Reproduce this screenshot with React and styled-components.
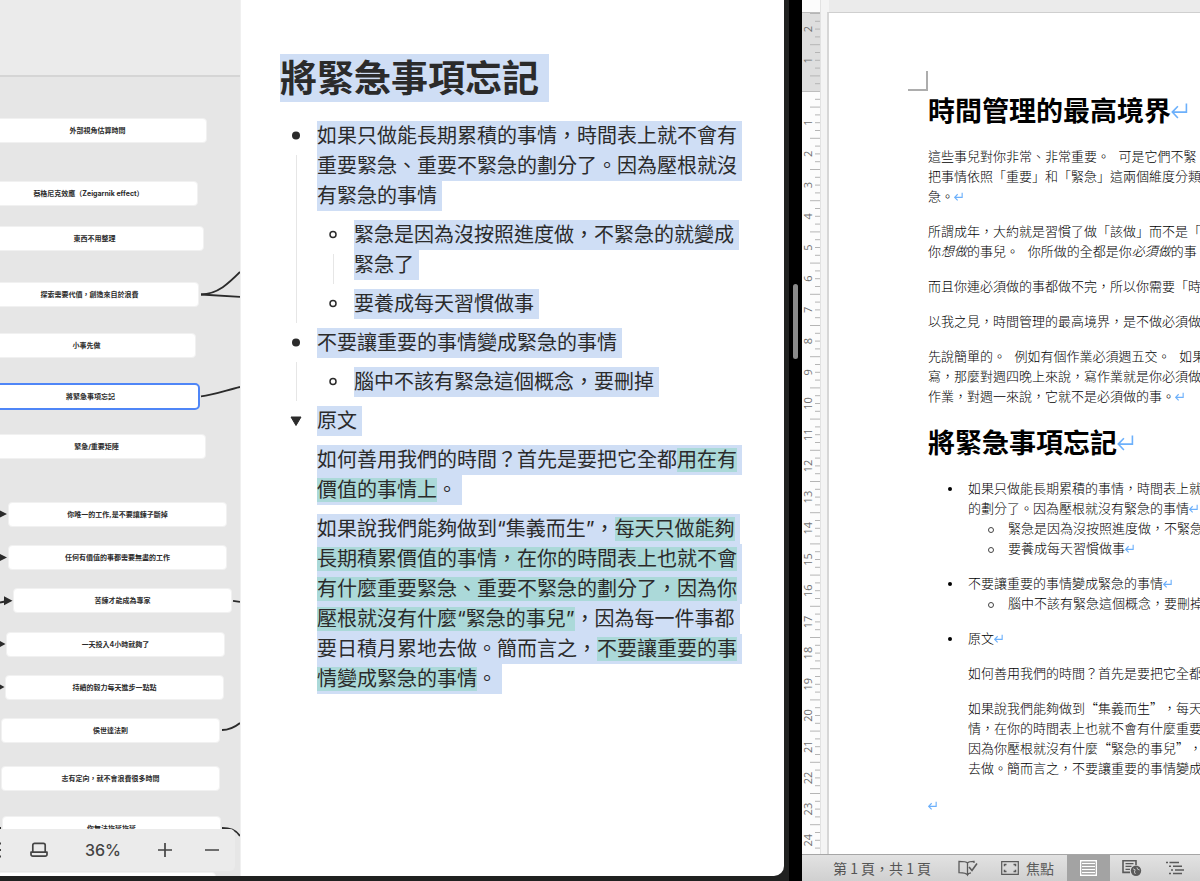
import styled, { createGlobalStyle, css } from "styled-components";

const GlobalStyle = createGlobalStyle`
  *, *::before {
    box-sizing: border-box;
  }

  body {
    margin: 0;
    overflow: hidden;
    font-family: Inter, "Noto Sans CJK TC", sans-serif;
    color: #2b2b2b;
    text-spacing-trim: space-all;
  }

  h1, h2, p, ul {
    margin: 0;
    padding: 0;
    list-style: none;
  }

  svg {
    display: block;
    flex: none;
  }
`;

const Screen = styled.main`
  display: grid;
  grid-template-columns: minmax(0, 789fr) 13px minmax(0, 398fr);
  height: 100vh;
  background: #000;
`;

/* ---------- left window ---------- */

const NotesWindow = styled.section`
  display: flex;
  min-height: 0;
  padding: 0 5px 5px 0;
  background: #202120;
`;

const NotesBody = styled.div`
  display: flex;
  flex: 1;
  min-width: 0;
  overflow: hidden;
  background: #fff;
  border-radius: 0 0 10px 0;
`;

const MapPane = styled.aside`
  position: relative;
  display: flex;
  flex-direction: column;
  flex: 0 0 241px;
  overflow: hidden;
  background: #e6e6e6;
  border-right: 1px solid #f0f0f0;
`;

const MapHeader = styled.div`
  flex: 0 0 77px;
  background: #ebebeb;
  border-bottom: 2px solid #d5d5d5;
`;

const Edges = styled.svg`
  position: absolute;
  top: 0;
  left: 0;
`;

const MapNode = styled.div`
  position: absolute;
  top: ${({ $y }) => $y}px;
  left: ${({ $x }) => $x}px;
  display: flex;
  align-items: center;
  justify-content: center;
  width: 219px;
  height: 25px;
  background: #fff;
  border: 1px solid #f1f1f1;
  border-radius: 4px;
  font-size: 7px;
  font-weight: 700;
  line-height: 10px;
  white-space: nowrap;

  ${({ $active }) =>
    $active &&
    css`
      height: 27px;
      border: 2px solid #4f86f7;
      border-radius: 5px;
    `}
`;

const MapToolbar = styled.div`
  position: absolute;
  right: 5px;
  bottom: 5px;
  left: 0;
  display: flex;
  align-items: center;
  justify-content: flex-end;
  gap: 29px;
  height: 42px;
  padding-right: 14px;
  overflow: hidden;
  background: #ebebeb;
  border-radius: 0 5px 5px 0;
`;

const ToolButton = styled.button`
  display: flex;
  flex: none;
  align-items: center;
  justify-content: center;
  width: 18px;
  height: 24px;
  padding: 0;
  background: none;
  border: 0;
  color: #444;
`;

const ZoomLevel = styled.output`
  width: 34px;
  margin: 0 8px;
  color: #444;
  font-size: 16px;
  font-weight: 500;
  line-height: 24px;
  text-align: center;
  white-space: nowrap;
`;

const Note = styled.article`
  flex: 1;
  min-width: 0;
  padding: 55px 40px 0 39px;
  font-size: 20px;
  line-height: 30px;
`;

const NoteTitle = styled.h1`
  margin-bottom: 18px;
  font-size: 37px;
  font-weight: 700;
  line-height: 48px;
`;

const Selected = styled.span`
  padding: 3px 5px 3px 0;
  background: #cfdef5;
  -webkit-box-decoration-break: clone;
  box-decoration-break: clone;

  ${NoteTitle} & {
    padding: 2px 10px 1px 0;
  }
`;

const Marked = styled.mark`
  background: #abd9d9;
  color: inherit;
`;

const NoteList = styled.ul`
  display: flex;
  flex-direction: column;
  gap: 9px;
`;

const NoteItem = styled.li`
  display: grid;
  grid-template-columns: 32px minmax(0, 1fr);
  column-gap: 5px;
`;

const Gutter = styled.div`
  display: flex;
  flex-direction: column;
  align-items: center;
`;

const MarkerBox = styled.span`
  display: flex;
  align-items: center;
  height: 30px;
  margin-bottom: 4px;
`;

const Guide = styled.span`
  flex: 1;
  width: 1px;
  margin-bottom: -4px;
  background: #e6e6e6;
`;

const ItemContent = styled.div`
  display: flex;
  flex-direction: column;
  gap: 9px;
`;

/* ---------- split handle ---------- */

const SplitBar = styled.div`
  display: flex;
  justify-content: center;
  padding-top: 284px;
`;

const SplitHandle = styled.span`
  width: 5px;
  height: 75px;
  background: #8b8b8b;
  border-radius: 3px;
`;

/* ---------- right window ---------- */

const WordWindow = styled.section`
  display: grid;
  grid-template-rows: minmax(0, 1fr) 27px;
  min-width: 0;
  min-height: 0;
  overflow: hidden;
  background: #fff;
  font-family: "Noto Sans CJK TC", sans-serif;
`;

const Workspace = styled.div`
  display: grid;
  grid-template-columns: 19px minmax(0, 1fr);
  min-height: 0;
  overflow: hidden;
`;

const RulerPane = styled.div`
  overflow: hidden;
  background: #fcfcfc;
  border-right: 1px solid #e2e2e2;
`;

const PageArea = styled.div`
  padding: 12px 0 0 6px;
  overflow: hidden;
  background: linear-gradient(90deg, #f4f4f4 8px, #ebebeb 8px);
`;

const Page = styled.article`
  position: relative;
  min-width: 596px;
  min-height: 100%;
  padding: 79px 0 0 99px;
  background: #fff;
  border-top: 1px solid #cfcfcf;
  border-left: 2px solid #d6d6d6;
  color: #000;
  font-size: 13px;
  font-weight: 300;
  line-height: 20px;
  white-space: nowrap;
`;

const CornerMark = styled.span`
  position: absolute;
  top: 58px;
  left: 79px;
  width: 20px;
  height: 20px;
  border: solid #adadad;
  border-width: 0 2px 2px 0;
`;

const Heading = styled.h2`
  margin-bottom: 18px;
  font-size: 27px;
  font-weight: 700;
  line-height: 36px;

  p + & {
    margin-top: 18px;
  }
`;

const Paragraph = styled.p`
  & + & {
    margin-top: 15px;
  }
`;

const DocList = styled.ul`
  display: flex;
  flex-direction: column;
  gap: 15px;
  padding-left: 40px;
  margin-bottom: 17px;

  & & {
    gap: 0;
    margin: 0;
  }
`;

const DocItem = styled.li`
  &::before {
    content: "";
    float: left;
    width: ${({ $open }) => ($open ? 6 : 4)}px;
    height: ${({ $open }) => ($open ? 6 : 4)}px;
    margin: 9px 0 0 -20px;
    border-radius: 50%;
    ${({ $open }) => ($open ? "border: 1px solid #444;" : "background: #000;")}
  }
`;

const ReturnIcon = styled.svg`
  display: inline-block;
  width: ${({ $big }) => ($big ? 17 : 9)}px;
  height: ${({ $big }) => ($big ? 17 : 9)}px;
  vertical-align: ${({ $big }) => ($big ? "2px" : "0")};
`;

const StatusBar = styled.footer`
  display: flex;
  align-items: stretch;
  min-width: 398px;
  padding-left: 31px;
  background: linear-gradient(#e2e2e2, #d0d0d0);
  border-top: 1px solid #a6a6a6;
  color: #555;
  font-size: 14px;
  line-height: 26px;
  white-space: nowrap;
`;

const PageCount = styled.span`
  width: 125px;
`;

const StatusButton = styled.button`
  display: flex;
  align-items: center;
  justify-content: ${({ $wide }) => ($wide ? "flex-start" : "center")};
  gap: 7px;
  width: ${({ $wide }) => ($wide ? 66 : 43)}px;
  padding: 0;
  background: ${({ $active }) => ($active ? "#a3a3a3" : "none")};
  border: 0;
  color: #5a5a5a;
  font: inherit;
`;

const ProofButton = styled(StatusButton)`
  justify-content: flex-start;
`;

const NODES = [
  { x: -12, y: 118, text: "外部視角估算時間" },
  { x: -21, y: 181, text: "蔡格尼克效應（Zeigarnik effect）" },
  { x: -15, y: 226, text: "東西不用整理" },
  { x: -20, y: 282, text: "探索需要代價，創造來自於浪費" },
  { x: -23, y: 333, text: "小事先做" },
  { x: -19, y: 383, text: "將緊急事項忘記", active: true },
  { x: -13, y: 434, text: "緊急/重要矩陣" },
  { x: 8, y: 502, text: "你唯一的工作,是不要讓鍊子斷掉" },
  { x: 8, y: 545, text: "任何有價值的事都需要無盡的工作" },
  { x: 13, y: 588, text: "苦練才能成為專家" },
  { x: 6, y: 632, text: "一天投入4小時就夠了" },
  { x: 5, y: 675, text: "持續的毅力每天進步一點點" },
  { x: 1, y: 718, text: "侯世達法則" },
  { x: 1, y: 766, text: "志有定向，就不會浪費很多時間" },
  { x: 2, y: 816, text: "你無法拖延拖延" },
  { x: -3, y: 872, text: "" },
];

function MapEdges() {
  return (
    <Edges width="240" height="876" fill="none" stroke="#2b2b2b" strokeWidth="1.8">
      <path d="M201 294.5C218 294 229 283 240 272" />
      <path d="M201 294.5L240 296.8" />
      <path d="M201 396.3C214 395 227 390 240 387" />
      <path d="M0 602.5L5 601.5" />
      <path d="M233 600.8L240 601.8" />
      <path d="M222 730C230 730 235 727 240 723" />
      <path d="M222 828C231 828 236 830 240 836" />
      <path d="M0 828H1" />
      <g fill="#2b2b2b" stroke="none">
        <path d="M-2 509.5L7 514L-2 518.5Z" />
        <path d="M-2 553L7 557.5L-2 562Z" />
        <path d="M4 596.3L12.5 600.8L4 605.3Z" />
        <path d="M-3 639.5L5.5 644L-3 648.5Z" />
        <path d="M-4 682.5L4.5 687L-4 691.5Z" />
      </g>
    </Edges>
  );
}

function Marker({ kind }) {
  return (
    <MarkerBox>
      <svg width="12" height="12" viewBox="0 0 12 12">
        {kind === "dot" && <circle cx="6" cy="5.5" r="4" fill="#2b2b2b" />}
        {kind === "ring" && (
          <circle cx="6" cy="5.5" r="3" fill="none" stroke="#2b2b2b" strokeWidth="1.5" />
        )}
        {kind === "toggle" && (
          <path d="M1 2h10L6 10.5z" fill="#2b2b2b" stroke="#2b2b2b" strokeLinejoin="round" />
        )}
      </svg>
    </MarkerBox>
  );
}

function Item({ kind, children }) {
  return (
    <NoteItem>
      <Gutter>
        <Marker kind={kind} />
        {kind !== "toggle" && <Guide />}
      </Gutter>
      <ItemContent>{children}</ItemContent>
    </NoteItem>
  );
}

function Line({ children }) {
  return (
    <p>
      <Selected>{children}</Selected>
    </p>
  );
}

function Return({ big }) {
  return (
    <ReturnIcon
      $big={big}
      viewBox="0 0 16 16"
      fill="none"
      stroke="#6cb0fb"
      strokeWidth={big ? 1.5 : 2}
      aria-hidden="true"
    >
      <path d="M14.5 1.5V9.5H1.5M6.5 4L1.2 9.5L6.5 15" />
    </ReturnIcon>
  );
}

const CM = 31.2;
const ZERO = 91.5;

function Ruler() {
  const ticks = [];
  for (let q = -10; q <= 99; q++) {
    if (q !== 0) {
      const y = ZERO + (q * CM) / 4;
      const long = Math.abs(q % 4) === 2;
      ticks.push(<path key={q} d={`M${long ? 8 : 13} ${y}H18`} />);
    }
  }
  const labels = [-2, -1];
  for (let n = 1; n <= 24; n++) labels.push(n);

  return (
    <svg width="18" height="854">
      <rect y="13" width="18" height="78.5" fill="#dedede" />
      <path d="M0 12.5H18M0 91.5H18" stroke="#bdbdbd" />
      <g stroke="#b5b5b5">{ticks}</g>
      <g fill="#707070" fontFamily="Open Sans, sans-serif" fontSize="11" textAnchor="middle">
        {labels.map((n) => (
          <text key={n} transform={`translate(10 ${ZERO + n * CM}) rotate(-90)`}>
            {Math.abs(n)}
          </text>
        ))}
      </g>
    </svg>
  );
}

function Notes() {
  return (
    <NotesWindow>
      <NotesBody>
        <MapPane>
          <MapHeader />
          <MapEdges />
          {NODES.map((node) => (
            <MapNode key={node.y} $x={node.x} $y={node.y} $active={node.active}>
              {node.text}
            </MapNode>
          ))}
          <MapToolbar>
            <ToolButton aria-label="List">
              <svg width="18" height="18" viewBox="0 0 18 18" stroke="currentColor" strokeWidth="1.8">
                <path d="M4 2.5H18M4 9H18M4 15.5H18" />
              </svg>
            </ToolButton>
            <ToolButton aria-label="Fit to screen">
              <svg width="18" height="16" viewBox="0 0 18 16" fill="none" stroke="currentColor" strokeWidth="1.7">
                <path d="M2.8 10V3.2A1.8 1.8 0 0 1 4.6 1.4H13.4A1.8 1.8 0 0 1 15.2 3.2V10" />
                <path d="M1 10.2H17V12.4A1.8 1.8 0 0 1 15.2 14.2H2.8A1.8 1.8 0 0 1 1 12.4Z" strokeLinejoin="round" />
              </svg>
            </ToolButton>
            <ZoomLevel>36%</ZoomLevel>
            <ToolButton aria-label="Zoom in">
              <svg width="14" height="14" viewBox="0 0 14 14" stroke="currentColor" strokeWidth="1.7">
                <path d="M7 0V14M0 7H14" />
              </svg>
            </ToolButton>
            <ToolButton aria-label="Zoom out">
              <svg width="14" height="14" viewBox="0 0 14 14" stroke="currentColor" strokeWidth="1.7">
                <path d="M0 7H14" />
              </svg>
            </ToolButton>
          </MapToolbar>
        </MapPane>

        <Note>
          <NoteTitle>
            <Selected>將緊急事項忘記</Selected>
          </NoteTitle>
          <NoteList>
            <Item kind="dot">
              <Line>如果只做能長期累積的事情，時間表上就不會有重要緊急、重要不緊急的劃分了。因為壓根就沒有緊急的事情</Line>
              <NoteList>
                <Item kind="ring">
                  <Line>緊急是因為沒按照進度做，不緊急的就變成緊急了</Line>
                </Item>
                <Item kind="ring">
                  <Line>要養成每天習慣做事</Line>
                </Item>
              </NoteList>
            </Item>
            <Item kind="dot">
              <Line>不要讓重要的事情變成緊急的事情</Line>
              <NoteList>
                <Item kind="ring">
                  <Line>腦中不該有緊急這個概念，要刪掉</Line>
                </Item>
              </NoteList>
            </Item>
            <Item kind="toggle">
              <Line>原文</Line>
              <Line>
                如何善用我們的時間？首先是要把它全都<Marked>用在有價值的事情上</Marked>。
              </Line>
              <Line>
                如果說我們能夠做到“集義而生”，
                <Marked>每天只做能夠長期積累價值的事情，在你的時間表上也就不會有什麼重要緊急、重要不緊急的劃分了，因為你壓根就沒有什麼“緊急的事兒”</Marked>
                ，因為每一件事都要日積月累地去做。簡而言之，
                <Marked>不要讓重要的事情變成緊急的事情</Marked>。
              </Line>
            </Item>
          </NoteList>
        </Note>
      </NotesBody>
    </NotesWindow>
  );
}

function WordDocument() {
  return (
    <Page>
      <CornerMark />
      <Heading>
        時間管理的最高境界
        <Return big />
      </Heading>
      <Paragraph>
        這些事兒對你非常、非常重要。&nbsp;&nbsp;&nbsp;可是它們不緊
        <br />
        把事情依照「重要」和「緊急」這兩個維度分類
        <br />
        急。
        <Return />
      </Paragraph>
      <Paragraph>
        所謂成年，大約就是習慣了做「該做」而不是「
        <br />
        你<em>想做</em>的事兒。&nbsp;&nbsp;&nbsp;你所做的全都是你<em>必須做</em>的事
      </Paragraph>
      <Paragraph>而且你連必須做的事都做不完，所以你需要「時</Paragraph>
      <Paragraph>以我之見，時間管理的最高境界，是不做必須做</Paragraph>
      <Paragraph>
        先說簡單的。&nbsp;&nbsp;&nbsp;例如有個作業必須週五交。&nbsp;&nbsp;&nbsp;如果
        <br />
        寫，那麼對週四晚上來說，寫作業就是你必須做
        <br />
        作業，對週一來說，它就不是必須做的事。
        <Return />
      </Paragraph>
      <Heading>
        將緊急事項忘記
        <Return big />
      </Heading>
      <DocList>
        <DocItem>
          如果只做能長期累積的事情，時間表上就
          <br />
          的劃分了。因為壓根就沒有緊急的事情
          <Return />
          <DocList>
            <DocItem $open>緊急是因為沒按照進度做，不緊急</DocItem>
            <DocItem $open>
              要養成每天習慣做事
              <Return />
            </DocItem>
          </DocList>
        </DocItem>
        <DocItem>
          不要讓重要的事情變成緊急的事情
          <Return />
          <DocList>
            <DocItem $open>腦中不該有緊急這個概念，要刪掉</DocItem>
          </DocList>
        </DocItem>
        <DocItem>
          <Paragraph>
            原文
            <Return />
          </Paragraph>
          <Paragraph>如何善用我們的時間？首先是要把它全都</Paragraph>
          <Paragraph>
            如果說我們能夠做到“集義而生”，每天
            <br />
            情，在你的時間表上也就不會有什麼重要
            <br />
            因為你壓根就沒有什麼“緊急的事兒”，
            <br />
            去做。簡而言之，不要讓重要的事情變成
          </Paragraph>
        </DocItem>
      </DocList>
      <Paragraph>
        <Return />
      </Paragraph>
    </Page>
  );
}

function Word() {
  return (
    <WordWindow>
      <Workspace>
        <RulerPane>
          <Ruler />
        </RulerPane>
        <PageArea>
          <WordDocument />
        </PageArea>
      </Workspace>
      <StatusBar>
        <PageCount>第 1 頁，共 1 頁</PageCount>
        <ProofButton aria-label="Proofing">
          <svg width="20" height="18" viewBox="0 0 20 18" fill="none" stroke="currentColor" strokeWidth="1.3">
            <path d="M9.5 4V16M9.5 4C8.5 2.8 7 2.4 1 2.4V13.6C6 13.6 8.5 14 9.5 16C10 14.8 11 14 13 13.8M9.5 4C10.5 2.8 12 2.4 16 2.4V4" />
            <path d="M11 8L14 11.5L19 4.5" strokeWidth="1.6" />
          </svg>
        </ProofButton>
        <StatusButton $wide>
          <svg width="18" height="14" viewBox="0 0 18 14" fill="none" stroke="currentColor" strokeWidth="1.2">
            <path d="M0.7 0.7H17.3V13.3H0.7Z" />
            <path d="M3.5 5.2V3.5H5.5M12.5 3.5H14.5V5.2M14.5 8.8V10.5H12.5M5.5 10.5H3.5V8.8" strokeWidth="1.5" />
          </svg>
          焦點
        </StatusButton>
        <StatusButton $active aria-label="Print layout">
          <svg width="17" height="16" viewBox="0 0 17 16">
            <path d="M0.7 0.7H16.3V15.3H0.7Z" fill="#909090" stroke="#fff" strokeWidth="1.4" />
            <path d="M2 3.5H15M2 6.5H15M2 9.5H15M2 12.5H15" stroke="#fff" strokeWidth="1.3" />
          </svg>
        </StatusButton>
        <StatusButton aria-label="Web layout">
          <svg width="20" height="18" viewBox="0 0 20 18" fill="none" stroke="currentColor" strokeWidth="1.3">
            <path d="M8 13.4H1V1.7H14V6" strokeWidth="1.6" />
            <path d="M3.5 4.6H11.5M3.5 7.4H9.5M3.5 10.4H8" />
            <circle cx="14" cy="11.8" r="5.2" fill="#5a5a5a" stroke="none" />
            <path d="M11 9.8L13.2 10.8L12.4 13L13.4 15M15 8.4L15.6 10.2L17.6 11" stroke="#c4c4c4" strokeWidth="1" />
          </svg>
        </StatusButton>
        <StatusButton aria-label="Outline">
          <svg width="18" height="14" viewBox="0 0 18 14" fill="none" stroke="currentColor" strokeWidth="1.5">
            <path d="M0 1.5H2M3.5 1.5H13M3 5.2H5M7 5.2H16M5 8.9H7M9 8.9H18M3 12.6H5M7 12.6H16" />
          </svg>
        </StatusButton>
      </StatusBar>
    </WordWindow>
  );
}

function App() {
  return (
    <>
      <GlobalStyle />
      <Screen lang="zh-Hant">
        <Notes />
        <SplitBar>
          <SplitHandle />
        </SplitBar>
        <Word />
      </Screen>
    </>
  );
}

export default App;
